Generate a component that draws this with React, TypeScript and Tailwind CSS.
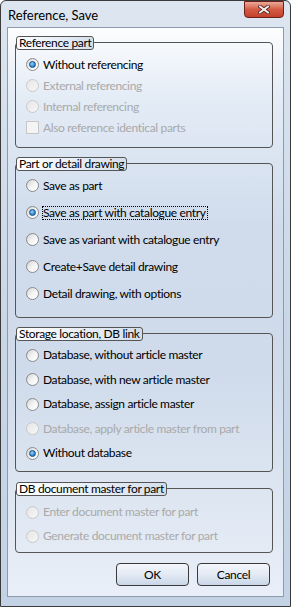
import type { ReactNode } from "react";

type Item = { label: string; checked?: boolean; disabled?: boolean; focus?: boolean; box?: boolean };

const groups: { label: string; pad: string; row: string; height: string; gap: string; items: Item[] }[] = [
  {
    label: "Reference part",
    pad: "pt-[11px]",
    row: "h-[21px]",
    height: "h-[106px]",
    gap: "mt-[14px]",
    items: [
      { label: "Without referencing", checked: true },
      { label: "External referencing", disabled: true },
      { label: "Internal referencing", disabled: true },
      { label: "Also reference identical parts", disabled: true, box: true },
    ],
  },
  {
    label: "Part or detail drawing",
    pad: "pt-[8px]",
    row: "h-[27px]",
    height: "h-[155px]",
    gap: "mt-[15px]",
    items: [
      { label: "Save as part" },
      { label: "Save as part with catalogue entry", checked: true, focus: true },
      { label: "Save as variant with catalogue entry" },
      { label: "Create+Save detail drawing" },
      { label: "Detail drawing, with options" },
    ],
  },
  {
    label: "Storage location, DB link",
    pad: "pt-[9px]",
    row: "h-[24.5px]",
    height: "h-[139px]",
    gap: "mt-[15px]",
    items: [
      { label: "Database, without article master" },
      { label: "Database, with new article master" },
      { label: "Database, assign article master" },
      { label: "Database, apply article master from part", disabled: true },
      { label: "Without database", checked: true },
    ],
  },
  {
    label: "DB document master for part",
    pad: "pt-[11px]",
    row: "h-[24px]",
    height: "h-[65px]",
    gap: "mt-[16px]",
    items: [
      { label: "Enter document master for part", disabled: true },
      { label: "Generate document master for part", disabled: true },
    ],
  },
];

function Radio({ checked, disabled }: { checked?: boolean; disabled?: boolean }) {
  if (disabled) {
    return <span className="h-[13px] w-[13px] shrink-0 rounded-full border border-[#c9c9c9] bg-gradient-to-br from-[#e6e6e6] to-[#f7f7f7]" />;
  }
  return (
    <span className="flex h-[13px] w-[13px] shrink-0 items-center justify-center rounded-full border border-[#8a8a8a] bg-gradient-to-br from-[#d2d2d2] via-[#f4f4f4] to-white">
      {checked && (
        <span className="h-[7px] w-[7px] rounded-full border border-[#174f86] bg-[radial-gradient(circle_at_40%_35%,#9ad6ff_0%,#3b8fd0_55%,#1c5f9c_100%)]" />
      )}
    </span>
  );
}

function Row({ item, row }: { item: Item; row: string }) {
  return (
    <div className={`flex items-center gap-[3px] pl-[10px] ${row}`}>
      {item.box ? (
        <span className="h-[13px] w-[13px] shrink-0 border border-[#c7c7c7] bg-[#f4f4f4]" />
      ) : (
        <Radio checked={item.checked} disabled={item.disabled} />
      )}
      <span
        className={`whitespace-nowrap border pr-[1px] leading-[12px] ${
          item.focus ? "border-dotted border-black" : "border-transparent"
        } ${item.disabled ? "text-[#a9a9a9]" : "text-black"}`}
      >
        {item.label}
      </span>
    </div>
  );
}

function Group({ label, className, children }: { label: string; className: string; children: ReactNode }) {
  return (
    <div className={`relative ml-[7px] w-[258px] rounded-[4px] border border-[#555] ${className}`}>
      <span className="absolute left-0 -top-[7px] h-[14px] whitespace-nowrap rounded-[3px] border border-[#555] bg-gradient-to-r from-white to-[#d3deed] px-[2px] leading-[12px] text-black">
        {label}
      </span>
      {children}
    </div>
  );
}

function Button({ children }: { children: ReactNode }) {
  return (
    <button className="flex h-[23px] w-[73px] items-center justify-center rounded-[4px] border border-[#3a3a3a] bg-gradient-to-b from-[#f3f6fb] via-[#e3eaf4] to-[#c9d6e8] text-black">
      {children}
    </button>
  );
}

export default function App() {
  return (
    <div className="flex h-[607px] w-[291px] flex-col rounded-t-[6px] border border-[#3b3b3b] bg-gradient-to-b from-[#dde6f0] via-[#c9d7e8] to-[#c3d2e5] font-['Lato','Noto_Sans',sans-serif] text-[12px] tracking-[-0.35px]">
      <div className="flex h-[26px] shrink-0 items-start justify-between">
        <span className="mt-[5px] pl-[7px] text-[13px] tracking-normal text-black">Reference, Save</span>
        <div className="mr-[6px] flex h-[17px] w-[40px] items-center justify-center rounded-b-[4px] border border-[#6e2018] bg-gradient-to-b from-[#eba99a] via-[#d45a45] to-[#c2412b]">
          <svg width="12" height="9" viewBox="0 0 12 9">
            <path d="M2 1.5 L10 7.5 M10 1.5 L2 7.5" stroke="#5a2a24" strokeWidth="3.6" strokeLinecap="square" />
            <path d="M2 1.5 L10 7.5 M10 1.5 L2 7.5" stroke="#f4f4f4" strokeWidth="1.8" strokeLinecap="square" />
          </svg>
        </div>
      </div>
      <div className="mx-[6px] flex h-[570px] flex-col border border-[#8c9bb0] bg-[linear-gradient(to_bottom,#fcfdfe_0%,#e4ecf6_12%,#d0dcec_35%,#cfdbeb_60%,#dfe7f2_85%,#e9eff8_100%)]">
        {groups.map((g) => (
          <Group key={g.label} label={g.label} className={`${g.gap} ${g.height} ${g.pad}`}>
            {g.items.map((it) => (
              <Row key={it.label} item={it} row={g.row} />
            ))}
          </Group>
        ))}
        <div className="mt-[10px] flex justify-end gap-[8px] pr-[13px]">
          <Button>OK</Button>
          <Button>Cancel</Button>
        </div>
      </div>
    </div>
  );
}
